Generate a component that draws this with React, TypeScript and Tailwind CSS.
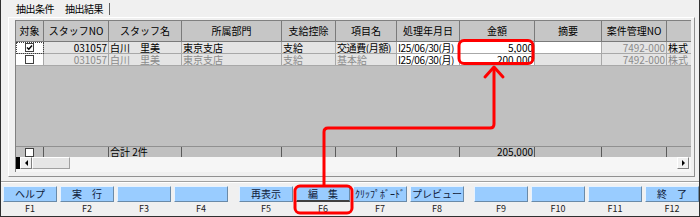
import React from 'react';

type Cell = {
    text?: string;
    align?: 'left' | 'right' | 'center';
    white?: boolean;
    dim?: boolean;
    check?: boolean;
    focus?: boolean;
    tight?: boolean;
};

const widths = [28, 65, 73, 100, 54, 61, 63, 75, 67, 65, 25];

const headers = ['対象', 'スタッフNO', 'スタッフ名', '所属部門', '支給控除', '項目名', '処理年月日', '金額', '摘要', '案件管理NO', ''];

const rows: Cell[][] = [
    [
        { check: true, white: true, focus: true },
        { text: '031057', align: 'right' },
        { text: '白川　里美' },
        { text: '東京支店' },
        { text: '支給' },
        { text: '交通費(月額)', tight: true },
        { text: 'I25/06/30(月)', white: true, tight: true },
        { text: '5,000', align: 'right', white: true },
        { text: '', white: true },
        { text: '7492-000', align: 'right', dim: true },
        { text: '株式' },
    ],
    [
        { check: false, white: true },
        { text: '031057', align: 'right', dim: true },
        { text: '白川　里美', dim: true },
        { text: '東京支店', dim: true },
        { text: '支給', dim: true },
        { text: '基本給', dim: true },
        { text: 'I25/06/30(月)', white: true, tight: true },
        { text: '200,000', align: 'right', white: true },
        { text: '' },
        { text: '7492-000', align: 'right', dim: true },
        { text: '株式', dim: true },
    ],
];

const keys = [
    ['ヘルプ', 'F1'],
    ['実　行', 'F2'],
    ['', 'F3'],
    ['', 'F4'],
    ['再表示', 'F5'],
    ['編　集', 'F6'],
    ['ｸﾘｯﾌﾟﾎﾞｰﾄﾞ', 'F7'],
    ['プレビュー', 'F8'],
    ['', 'F9'],
    ['', 'F10'],
    ['', 'F11'],
    ['終　了', 'F12'],
];

const CheckBox = ({ checked }: { checked: boolean }) => (
    <div className="w-[9px] h-[9px] bg-white border border-[#404040] flex items-center justify-center">
        {checked && (
            <svg width="7" height="7" viewBox="0 0 7 7">
                <path d="M1 3.5 L2.8 5.3 L6 1.5" stroke="#000" strokeWidth="1.4" fill="none" />
            </svg>
        )}
    </div>
);

const FKey = ({ label, fkey, active }: { label: string; fkey: string; active?: boolean }) => (
    <div className="flex flex-col items-center w-[54px]">
        <div
            className={`w-full h-[16px] bg-[#99ccff] border border-t-[#e6f2ff] border-l-[#e6f2ff] border-r-[#6a8aa8] ${
                active ? 'border-b-2 border-b-[#404040]' : 'border-b-[#6a8aa8]'
            } flex items-center justify-center text-[10px] leading-[12px] text-[#10203a] whitespace-nowrap`}
        >
            {label}
        </div>
        <div className="text-[9px] leading-[10px] mt-[2px] text-[#202020]">{fkey}</div>
    </div>
);

export default function App() {
    return (
        <div className="relative w-[700px] h-[217px] bg-[#f0f0f0] border-l border-r border-b border-[#303030] overflow-hidden flex flex-col [font-family:'Noto_Sans_CJK_JP',sans-serif] text-black">
            {/* tabs */}
            <div className="h-[17px] flex items-center pl-[14px] text-[10px] leading-[12px] tracking-[-0.5px]">
                <div className="px-[1px]">抽出条件</div>
                <div className="ml-[9px] pl-[1px] pr-[6px] border-r border-[#606060]">抽出結果</div>
            </div>

            {/* tab page */}
            <div className="ml-[7px] mr-[4px] h-[160px] border border-t-white border-l-white border-r-[#909090] border-b-[#909090] pl-[6px] pr-[2px] pt-[2px] pb-[4px] flex">
                <div className="w-[676px] h-full border-l border-t border-[#808080] flex flex-col bg-[#c0c0c0] overflow-hidden">
                    {/* header */}
                    <div className="flex h-[21px] shrink-0">
                        {headers.map((h, i) => (
                            <div
                                key={i}
                                style={{ width: widths[i] }}
                                className="shrink-0 bg-[#c6c6c6] border-r border-b border-[#7a7a7a] flex items-center justify-center text-[10px] leading-[12px] whitespace-nowrap overflow-hidden"
                            >
                                {h}
                            </div>
                        ))}
                    </div>

                    {/* rows */}
                    {rows.map((r, ri) => (
                        <div key={ri} className="flex h-[12px] shrink-0">
                            {r.map((c, ci) => (
                                <div
                                    key={ci}
                                    style={{ width: widths[ci] }}
                                    className={`shrink-0 border-r border-b border-[#a8a8a8] flex items-center px-[1px] text-[10px] leading-[11px] whitespace-nowrap overflow-hidden ${
                                        c.tight ? 'tracking-[-0.4px]' : ''
                                    } ${c.white ? 'bg-white' : 'bg-[#e4e4e4]'} ${c.dim ? 'text-[#8a8a8a]' : 'text-black'} ${
                                        c.check !== undefined ? 'justify-center' : c.align === 'right' ? 'justify-end' : 'justify-start'
                                    } ${c.focus ? 'outline outline-1 outline-dotted outline-[#404040] -outline-offset-1' : ''}`}
                                >
                                    {c.check !== undefined ? <CheckBox checked={c.check} /> : c.text}
                                </div>
                            ))}
                        </div>
                    ))}

                    {/* empty area */}
                    <div className="flex-1 bg-[#c0c0c0]" />

                    {/* total row */}
                    <div className="flex h-[11px] shrink-0 border-t border-[#909090]">
                        {widths.map((w, i) => (
                            <div
                                key={i}
                                style={{ width: w }}
                                className={`shrink-0 border-r border-[#5a5a5a] flex items-center text-[10px] leading-[10px] whitespace-nowrap overflow-hidden px-[1px] ${
                                    i === 0 ? 'justify-center' : i === 7 ? 'justify-end' : 'justify-start'
                                }`}
                            >
                                {i === 0 && <CheckBox checked={false} />}
                                {i === 2 && '合計 2件'}
                                {i === 7 && '205,000'}
                            </div>
                        ))}
                    </div>

                    {/* horizontal scrollbar */}
                    <div className="flex h-[12px] shrink-0 bg-[#f6f6f6]">
                        <div className="w-[4px] bg-black" />
                        <div className="w-[12px] bg-[#f0f0f0] border border-t-white border-l-white border-r-[#808080] border-b-[#808080] flex items-center justify-center">
                            <div className="w-0 h-0 border-y-[3px] border-y-transparent border-r-[3px] border-r-black" />
                        </div>
                        <div className="w-[38px] bg-[#e6e6e6] border border-t-white border-l-white border-r-[#a0a0a0] border-b-[#a0a0a0]" />
                        <div className="flex-1" />
                        <div className="w-[12px] bg-[#f0f0f0] border border-t-white border-l-white border-r-[#808080] border-b-[#808080] flex items-center justify-center">
                            <div className="w-0 h-0 border-y-[3px] border-y-transparent border-l-[3px] border-l-black" />
                        </div>
                        <div className="w-[2px]" />
                    </div>
                    <div className="h-[3px] shrink-0 bg-[#f6f6f6]" />
                </div>
            </div>

            {/* separator */}
            <div className="mt-[4px] h-[2px] border-t border-b border-t-[#a0a0a0] border-b-white" />

            {/* function keys */}
            <div className="mt-[3px] flex pl-[2px]">
                {[0, 1, 2].map((g) => (
                    <div key={g} className={`flex gap-[3px] ${g === 1 ? 'ml-[11px]' : g === 2 ? 'ml-[10px]' : ''}`}>
                        {keys.slice(g * 4, g * 4 + 4).map(([l, f]) => (
                            <FKey key={f} label={l} fkey={f} active={f === 'F6'} />
                        ))}
                    </div>
                ))}
            </div>

            {/* red annotations */}
            <svg className="absolute left-0 top-0 pointer-events-none" width="700" height="217" viewBox="0 0 700 217">
                <rect x="458" y="40.5" width="74" height="23" rx="5" fill="none" stroke="#ff0000" strokeWidth="3" />
                <rect x="294" y="186" width="57" height="27" rx="5" fill="none" stroke="#ff0000" strokeWidth="3" />
                <path
                    d="M323 186 V132 Q323 128 327 128 H489 Q493 128 493 124 V68"
                    fill="none"
                    stroke="#ff0000"
                    strokeWidth="3"
                    strokeLinejoin="round"
                />
                <path d="M484 77 L493 67 L502 77" fill="none" stroke="#ff0000" strokeWidth="3" strokeLinecap="round" strokeLinejoin="round" />
            </svg>
        </div>
    );
}
